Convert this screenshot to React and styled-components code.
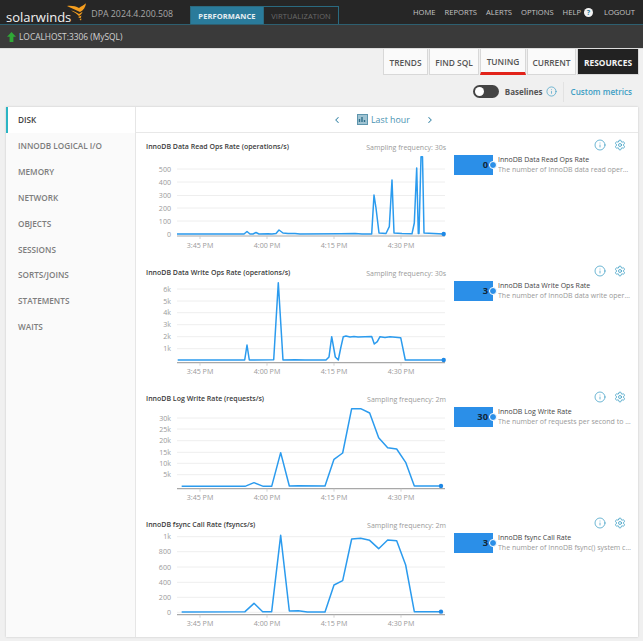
import React from 'react';
import styled, { createGlobalStyle } from 'styled-components';
import { ChevronLeft, ChevronRight, Settings, Info } from 'lucide-react';

const GlobalStyle = createGlobalStyle`
  html, body { margin: 0; padding: 0; background: #f0f0f0; }
  body { font-family: "Open Sans", "Liberation Sans", sans-serif; overflow: hidden; }
  * { box-sizing: border-box; }
`;

const sideItems = ['DISK', 'INNODB LOGICAL I/O', 'MEMORY', 'NETWORK', 'OBJECTS', 'SESSIONS', 'SORTS/JOINS', 'STATEMENTS', 'WAITS'];
const topLinks = ['HOME', 'REPORTS', 'ALERTS', 'OPTIONS'];
const tabs = ['TRENDS', 'FIND SQL', 'TUNING', 'CURRENT', 'RESOURCES'];

// zoomed crop coords -> page coords
const z = (ox, oy, list) => list.map(([x, y]) => [ox + x / 3, oy + y / 3]);

const charts = [
  {
    title: 'InnoDB Data Read Ops Rate (operations/s)',
    freq: 'Sampling frequency: 30s',
    name: 'InnoDB Data Read Ops Rate',
    desc: 'The number of InnoDB data read operations per second',
    value: '0',
    top: 133,
    axisY: 236,
    labelY: 247.5,
    grid: [['500', 169], ['400', 182], ['300', 195.5], ['200', 208], ['100', 221], ['0', 234]],
    points: [
      [177, 234], [244, 234], [247, 231.5], [250, 234], [253, 234], [256, 232.5], [259, 234], [268, 233.8], [272, 234], [276, 233.5], [279, 230], [283, 233], [288, 233.6], [295, 233.5], [300, 234],
      [340, 233.8], [355, 233.4], [362, 234], [371.7, 234], [374, 195], [376, 208], [379, 233], [386, 233.5], [389.3, 226.7], [392, 180], [394, 233], [402, 233.5], [412, 233.8], [414.3, 223], [416.7, 168], [418.3, 233.5], [419, 233.5], [421, 156.7], [422.5, 156.7], [424, 233], [443.7, 234],
    ],
  },
  {
    title: 'InnoDB Data Write Ops Rate (operations/s)',
    freq: 'Sampling frequency: 30s',
    name: 'InnoDB Data Write Ops Rate',
    desc: 'The number of InnoDB data write operations per second',
    value: '3',
    top: 259,
    axisY: 362.7,
    labelY: 373.5,
    grid: [['6k', 289], ['5k', 301], ['4k', 312.7], ['3k', 324.7], ['2k', 336.7], ['1k', 348.7]],
    points: [
      [177.7, 360], [244.7, 360], [247, 345], [249.3, 360], [273.7, 359.8], [278.3, 282.7], [283, 360], [295, 359.7], [305, 360], [326, 360], [329, 357], [331.7, 336.7], [335.3, 357], [338.3, 360], [340.5, 349], [343.3, 336.7], [346, 336], [350, 337], [354, 336.4], [358, 337], [371.7, 336.4], [374.3, 344], [377.3, 341.7], [380, 336.7], [385, 337.6], [390, 336.7], [400.7, 337.7], [405.3, 360], [443.7, 360],
    ],
  },
  {
    title: 'InnoDB Log Write Rate (requests/s)',
    freq: 'Sampling frequency: 2m',
    name: 'InnoDB Log Write Rate',
    desc: 'The number of requests per second to the log file',
    value: '30',
    top: 385,
    axisY: 488.7,
    labelY: 499.5,
    grid: [['30k', 418], ['25k', 429], ['20k', 440.7], ['15k', 452.3], ['10k', 463.3], ['5k', 474.7]],
    points: z(130, 380, [[155, 319], [345, 319], [372, 308], [400, 319], [425, 319], [452, 218], [478, 318], [505, 317], [585, 318], [612, 238], [638, 219], [665, 86], [692, 86], [719, 99], [746, 173], [773, 203], [800, 207], [827, 247], [853, 318], [933, 318]]),
  },
  {
    title: 'InnoDB fsync Call Rate (fsyncs/s)',
    freq: 'Sampling frequency: 2m',
    name: 'InnoDB fsync Call Rate',
    desc: 'The number of InnoDB fsync() system calls per second',
    value: '3',
    top: 511,
    axisY: 614.7,
    labelY: 625.5,
    grid: [['1k', 536.7], ['800', 551.7], ['600', 567], ['400', 582.3], ['200', 597.3], ['0', 612.3]],
    points: z(130, 510, [[155, 306], [345, 305], [372, 280], [398, 305], [425, 305], [452, 76], [478, 303], [505, 302], [532, 306], [585, 306], [612, 225], [638, 212], [665, 87], [692, 85], [719, 91], [746, 116], [773, 90], [800, 92], [827, 165], [853, 305], [933, 305]]),
  },
];

const timeLabels = [['3:45 PM', 200], ['4:00 PM', 267], ['4:15 PM', 334], ['4:30 PM', 401]];

const Page = styled.div`
  width: 643px;
  height: 641px;
  overflow: hidden;
  display: flex;
  flex-direction: column;
  background: #f0f0f0;
`;

const TopBar = styled.header`
  height: 25px;
  background: #262626;
  border-bottom: 1px solid #2d5f70;
  display: flex;
  align-items: flex-end;
  padding-left: 6px;
  padding-right: 8px;
`;

const Brand = styled.div`
  display: flex;
  align-items: flex-end;
  width: 184px;
  height: 24px;
`;

const BrandName = styled.span`
  color: #f2f2f2;
  font-size: 13px;
  line-height: 20px;
  height: 24px;
  padding-top: 7px;
`;

const Flame = styled.svg`
  flex: none;
  width: 22px;
  height: 20px;
  margin-left: -5px;
  margin-top: 2px;
  align-self: flex-start;
`;

const Version = styled.span`
  color: #a8a8a8;
  font-size: 8.8px;
  line-height: 12px;
  margin-left: 3px;
  padding-bottom: 4px;
  white-space: nowrap;
`;

const ModeTabs = styled.div`
  display: flex;
  height: 18px;
`;

const ModeTab = styled.div`
  width: ${p => (p.$active ? '74px' : '75px')};
  display: flex;
  align-items: center;
  justify-content: center;
  font-size: 7.5px;
  font-weight: ${p => (p.$active ? 700 : 400)};
  letter-spacing: 0.1px;
  color: ${p => (p.$active ? '#e6eef2' : '#6a6a6a')};
  background: ${p => (p.$active ? '#2a7b9b' : 'transparent')};
  border: 1px solid #2a6a80;
  border-bottom: none;
  border-left: ${p => (p.$active ? '1px solid #2a6a80' : 'none')};
`;

const TopLinks = styled.nav`
  margin-left: auto;
  height: 24px;
  display: flex;
  align-items: center;
  gap: 9px;
  font-size: 7.6px;
  color: #c4c4c4;
`;

const HelpLink = styled.span`
  display: flex;
  align-items: center;
  gap: 3px;
  margin-right: 2px;
`;

const HelpBadge = styled.span`
  width: 9px;
  height: 9px;
  border-radius: 50%;
  background: #f2f2f2;
  color: #2a7b9b;
  font-size: 7px;
  font-weight: 700;
  line-height: 9px;
  text-align: center;
`;

const HostBar = styled.div`
  height: 24px;
  background: #3a3a3a;
  border-bottom: 1px solid #dcdcdc;
  display: flex;
  align-items: center;
  gap: 3px;
  padding-left: 7px;
  color: #d2d2d2;
  font-size: 8.4px;
`;

const Toolbar = styled.div`
  display: flex;
  justify-content: flex-end;
  padding-right: 4px;
`;

const Tab = styled.div`
  height: 26px;
  width: ${p => p.$w}px;
  margin-left: 1px;
  padding-top: 2px;
  display: flex;
  align-items: center;
  justify-content: center;
  font-size: 8.4px;
  font-weight: ${p => (p.$dark ? 700 : 600)};
  color: ${p => (p.$dark ? '#f4f4f4' : '#555')};
  background: ${p => (p.$dark ? '#222' : '#fafafa')};
  border: 1px solid #d8d8d8;
  border-bottom: ${p => (p.$red ? '3px solid #e2231a' : '1px solid #d8d8d8')};
  border-top: none;
`;

const BaselineRow = styled.div`
  height: 32px;
  padding-top: 1px;
  display: flex;
  align-items: center;
  justify-content: flex-end;
  padding-right: 11px;
`;

const Toggle = styled.span`
  width: 26px;
  height: 13px;
  border-radius: 7px;
  background: #444;
  padding: 2px 0 0 2px;
  margin-right: 6px;
`;

const Knob = styled.span`
  display: block;
  width: 9px;
  height: 9px;
  border-radius: 50%;
  background: #fff;
`;

const BaselineLabel = styled.span`
  font-size: 8px;
  font-weight: 700;
  color: #555;
  margin-right: 3px;
`;

const MetricsLink = styled.span`
  font-size: 8.1px;
  font-weight: 600;
  color: #3d9ec4;
  margin-left: 6px;
  padding-left: 7px;
  line-height: 20px;
  border-left: 1px solid #e2e2e2;
`;

const Panel = styled.div`
  margin: 0 5px 0 6px;
  height: 530px;
  display: flex;
  background: #fff;
  box-shadow: 0 0 2px rgba(0, 0, 0, 0.18);
`;

const Sidebar = styled.aside`
  width: 130px;
  flex: none;
  background: #fafafa;
  border-right: 1px solid #e6e6e6;
`;

const SideItem = styled.div`
  height: 25.85px;
  padding-left: ${p => (p.$active ? '10px' : '12px')};
  display: flex;
  align-items: center;
  font-size: 8.2px;
  font-weight: 600;
  color: ${p => (p.$active ? '#444' : '#7d7d7d')};
  background: ${p => (p.$active ? '#fff' : 'transparent')};
  border-left: ${p => (p.$active ? '2px solid #2bb5c4' : 'none')};
`;

const Main = styled.main`
  flex: 1;
  min-width: 0;
`;

const RangeBar = styled.div`
  height: 26px;
  border-bottom: 1px solid #e8e8e8;
  display: flex;
  align-items: center;
  padding-left: 196px;
  color: #3a87a8;
`;

const RangeLabel = styled.span`
  font-size: 8.8px;
  color: #4a93b2;
  margin-left: 3px;
  margin-right: 15px;
`;

const RangeIcon = styled.svg`
  width: 11px;
  height: 11px;
  margin-left: 15px;
`;

const ChartRow = styled.section`
  height: 126px;
  display: flex;
`;

const ChartColumn = styled.div`
  width: 316px;
  flex: none;
`;

const ChartHead = styled.div`
  height: 24px;
  padding: 8px 6px 0 10px;
  display: flex;
  justify-content: space-between;
  align-items: flex-start;
`;

const ChartTitle = styled.span`
  font-size: 7px;
  font-weight: 600;
  color: #3c3c3c;
  line-height: 11px;
`;

const Frequency = styled.span`
  font-size: 7px;
  color: #9a9a9a;
  line-height: 11px;
  margin-top: 1px;
`;

const ChartSvg = styled.svg`
  display: block;
  width: 316px;
  height: 102px;
  overflow: visible;
`;

const AxisText = styled.text`
  font-size: 7.1px;
  fill: #9a9a9a;
`;

const SideColumn = styled.div`
  flex: 1;
  min-width: 0;
  padding: 6px 0 0 2px;
`;

const IconRow = styled.div`
  height: 13px;
  display: flex;
  justify-content: flex-end;
  gap: 8px;
  padding-right: 12px;
  color: #3d9ec4;
`;

const Legend = styled.div`
  display: flex;
  margin-top: 3px;
`;

const ValueBox = styled.div`
  position: relative;
  width: 39px;
  height: 20px;
  flex: none;
  background: #2b8fe8;
  color: #12263a;
  font-size: 9.4px;
  font-weight: 700;
  text-align: right;
  line-height: 20px;
  padding-right: 5px;
`;

const ValueDot = styled.span`
  position: absolute;
  right: -3px;
  top: 7px;
  width: 6px;
  height: 6px;
  border-radius: 50%;
  background: #2b8fe8;
  border: 1px solid #fff;
  box-sizing: content-box;
  margin: -1px;
`;

const LegendText = styled.div`
  width: 133px;
  margin-left: 5px;
`;

const LegendName = styled.div`
  font-size: 7px;
  line-height: 10px;
  color: #444;
  white-space: nowrap;
`;

const LegendDesc = styled.div`
  font-size: 7px;
  line-height: 10px;
  color: #999;
  white-space: nowrap;
  overflow: hidden;
  text-overflow: ellipsis;
`;

function Chart({ chart }) {
  const last = chart.points[chart.points.length - 1];
  return (
    <ChartSvg viewBox={`136 ${chart.top + 24} 316 102`}>
      {chart.grid.map(([label, y]) => (
        <g key={label}>
          <line x1="177" x2="445" y1={y} y2={y} stroke="#eeeeee" strokeWidth="1" />
          <AxisText x="171" y={y + 2.6} textAnchor="end">{label}</AxisText>
        </g>
      ))}
      <line x1="177" x2="445" y1={chart.axisY} y2={chart.axisY} stroke="#a8a8a8" strokeWidth="1.2" />
      {timeLabels.map(([label, x]) => (
        <g key={label}>
          <line x1={x} x2={x} y1={chart.axisY} y2={chart.axisY + 3} stroke="#c8c8c8" strokeWidth="0.8" />
          <AxisText x={x} y={chart.labelY} textAnchor="middle">{label}</AxisText>
        </g>
      ))}
      <polyline
        points={chart.points.map(p => p.join(',')).join(' ')}
        fill="none"
        stroke="#2b9bee"
        strokeWidth="1.5"
        strokeLinejoin="round"
      />
      <circle cx={last[0]} cy={last[1]} r="2.2" fill="#1e88e5" />
    </ChartSvg>
  );
}

export default function App() {
  return (
    <Page>
      <GlobalStyle />
      <TopBar>
        <Brand>
          <BrandName>solarwinds</BrandName>
          <Flame viewBox="0 0 22 20">
            <path d="M1 4 C6 3.5 10 4.5 13 6 C15 4.5 18 3 20 1.3 C19.5 5 17.5 8.5 14 10 C10 8 5 6 1 4Z" fill="#f59e1e" />
            <path d="M5 8.5 C8 9 11 10.5 13 12 L16.5 9.8 C16 11.5 15 13 13 14 C11 12 8 10 5 8.5Z" fill="#f59e1e" />
            <path d="M12 15 L15.5 13.5 L14.5 16.5Z M13.5 17.5 L15.5 16.5 L15 18.5Z" fill="#f59e1e" />
          </Flame>
          <Version>DPA 2024.4.200.508</Version>
        </Brand>
        <ModeTabs>
          <ModeTab $active>PERFORMANCE</ModeTab>
          <ModeTab>VIRTUALIZATION</ModeTab>
        </ModeTabs>
        <TopLinks>
          {topLinks.map(link => <span key={link}>{link}</span>)}
          <HelpLink>HELP <HelpBadge>?</HelpBadge></HelpLink>
          <span>LOGOUT</span>
        </TopLinks>
      </TopBar>
      <HostBar>
        <svg width="9" height="10" viewBox="0 0 9 10">
          <path d="M4.5 0 L9 4.8 H6.4 V10 H2.6 V4.8 H0 Z" fill="#2fa836" />
        </svg>
        <span>LOCALHOST:3306 (MySQL)</span>
      </HostBar>
      <Toolbar>
        {tabs.map((tab, i) => (
          <Tab key={tab} $w={[45, 50, 46, 49, 62][i]} $red={tab === 'TUNING'} $dark={tab === 'RESOURCES'}>{tab}</Tab>
        ))}
      </Toolbar>
      <BaselineRow>
        <Toggle><Knob /></Toggle>
        <BaselineLabel>Baselines</BaselineLabel>
        <Info size={11} color="#3d9ec4" strokeWidth={1.5} />
        <MetricsLink>Custom metrics</MetricsLink>
      </BaselineRow>
      <Panel>
        <Sidebar>
          {sideItems.map((item, i) => <SideItem key={item} $active={i === 0}>{item}</SideItem>)}
        </Sidebar>
        <Main>
          <RangeBar>
            <ChevronLeft size={10} strokeWidth={2.5} />
            <RangeIcon viewBox="0 0 11 11">
              <rect x="0.5" y="0.5" width="10" height="10" fill="#9fc3d2" stroke="#5d95ad" />
              <path d="M2.5 8 V5 M5 8 V3 M7.5 8 V6" stroke="#2f6f8a" strokeWidth="1.4" />
            </RangeIcon>
            <RangeLabel>Last hour</RangeLabel>
            <ChevronRight size={10} strokeWidth={2.5} />
          </RangeBar>
          {charts.map(chart => (
            <ChartRow key={chart.title}>
              <ChartColumn>
                <ChartHead>
                  <ChartTitle>{chart.title}</ChartTitle>
                  <Frequency>{chart.freq}</Frequency>
                </ChartHead>
                <Chart chart={chart} />
              </ChartColumn>
              <SideColumn>
                <IconRow>
                  <Info size={12} strokeWidth={1.5} />
                  <Settings size={12} strokeWidth={1.6} />
                </IconRow>
                <Legend>
                  <ValueBox>{chart.value}<ValueDot /></ValueBox>
                  <LegendText>
                    <LegendName>{chart.name}</LegendName>
                    <LegendDesc>{chart.desc}</LegendDesc>
                  </LegendText>
                </Legend>
              </SideColumn>
            </ChartRow>
          ))}
        </Main>
      </Panel>
    </Page>
  );
}
